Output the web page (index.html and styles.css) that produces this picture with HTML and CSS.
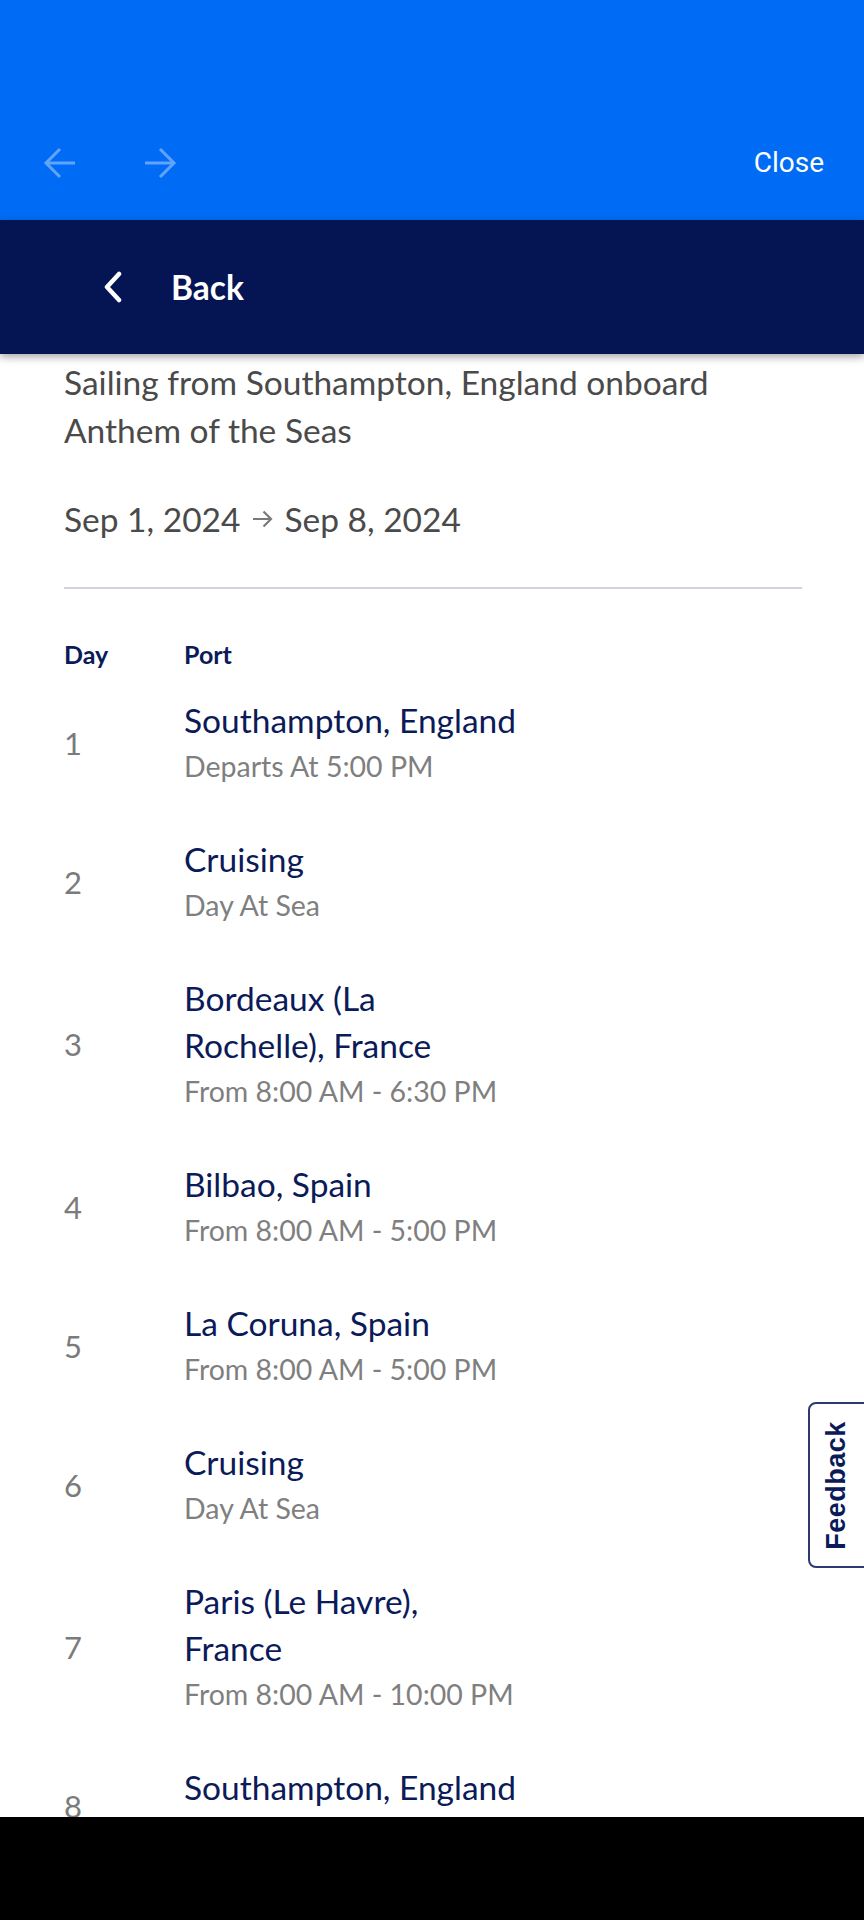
FILE: index.html
```html
<!DOCTYPE html>
<html lang="en">
<head>
<meta charset="utf-8">
<title>Itinerary</title>
<link rel="stylesheet" href="styles.css">
</head>
<body>
<div class="screen">
  <header class="topbar">
    <div class="nav-arrows">
      <svg class="arrow" width="34" height="34" viewBox="0 0 34 34"><path d="M32 17H3M17 3L3 17L17 31" fill="none" stroke="currentColor" stroke-width="3"/></svg>
      <svg class="arrow" width="34" height="34" viewBox="0 0 34 34"><path d="M2 17H31M17 3L31 17L17 31" fill="none" stroke="currentColor" stroke-width="3"/></svg>
    </div>
    <span class="close">Close</span>
  </header>
  <nav class="backbar">
    <svg class="chevron" width="22" height="32" viewBox="0 0 22 32"><path d="M17 3L5 16L17 29" fill="none" stroke="#fff" stroke-width="4.5" stroke-linecap="round" stroke-linejoin="round"/></svg>
    <span class="back-label">Back</span>
  </nav>
  <main class="content">
    <p class="sailing">Sailing from Southampton, England onboard Anthem of the Seas</p>
    <p class="dates">Sep 1, 2024 <svg class="date-arrow" width="24" height="24" viewBox="0 0 24 24"><path d="M3 12H21M13.5 4.5L21 12L13.5 19.5" fill="none" stroke="currentColor" stroke-width="2.2"/></svg> Sep 8, 2024</p>
    <hr class="divider">
    <div class="table-head">
      <span class="col-day">Day</span>
      <span class="col-port">Port</span>
    </div>
    <ol class="itinerary">
      <li class="stop"><span class="col-day num">1</span><div class="col-port"><div class="port">Southampton, England</div><div class="time">Departs At 5:00 PM</div></div></li>
      <li class="stop"><span class="col-day num">2</span><div class="col-port"><div class="port">Cruising</div><div class="time">Day At Sea</div></div></li>
      <li class="stop"><span class="col-day num">3</span><div class="col-port"><div class="port">Bordeaux (La Rochelle), France</div><div class="time">From 8:00 AM - 6:30 PM</div></div></li>
      <li class="stop"><span class="col-day num">4</span><div class="col-port"><div class="port">Bilbao, Spain</div><div class="time">From 8:00 AM - 5:00 PM</div></div></li>
      <li class="stop"><span class="col-day num">5</span><div class="col-port"><div class="port">La Coruna, Spain</div><div class="time">From 8:00 AM - 5:00 PM</div></div></li>
      <li class="stop"><span class="col-day num">6</span><div class="col-port"><div class="port">Cruising</div><div class="time">Day At Sea</div></div></li>
      <li class="stop"><span class="col-day num">7</span><div class="col-port"><div class="port">Paris (Le Havre), France</div><div class="time">From 8:00 AM - 10:00 PM</div></div></li>
      <li class="stop last"><span class="col-day num">8</span><div class="col-port"><div class="port">Southampton, England</div></div></li>
    </ol>
    <div class="feedback"><span>Feedback</span></div>
  </main>
  <div class="sysbar"></div>
</div>
</body>
</html>
```
FILE: styles.css
```css
* { box-sizing: border-box; }
html, body { margin: 0; padding: 0; background: #fff; }
body { font-family: "Lato", "Liberation Sans", sans-serif; }

.screen {
  width: 864px;
  height: 1920px;
  display: flex;
  flex-direction: column;
  overflow: hidden;
}

.topbar {
  height: 220px;
  flex: none;
  background: #006cf5;
  display: flex;
  align-items: flex-end;
  justify-content: space-between;
  padding: 0 40px 40px 43px;
}
.nav-arrows { display: flex; gap: 66px; color: rgba(255,255,255,0.38); }
.arrow { display: block; }
.close {
  font-family: Roboto, "Liberation Sans", sans-serif;
  font-size: 28px;
  color: #fff;
  line-height: 34px;
}

.backbar {
  height: 134px;
  flex: none;
  background: #051554;
  display: flex;
  align-items: center;
  padding: 0 0 0 102px;
  gap: 47px;
  position: relative;
  z-index: 2;
  box-shadow: 0 3px 8px rgba(0,0,0,0.35);
}
.chevron { display: block; }
.back-label { color: #fff; font-size: 33.5px; font-weight: 700; }

.content {
  flex: 1;
  position: relative;
  overflow: hidden;
  padding: 4px 62px 0 64px;
}
.sailing {
  margin: 0;
  font-size: 33.5px;
  line-height: 48px;
  color: #4a4a4a;
}
.dates {
  margin: 41px 0 0;
  font-size: 33.5px;
  line-height: 48px;
  color: #4a4a4a;
  display: flex;
  align-items: center;
  gap: 10px;
}
.date-arrow { color: #7a7a7a; display: block; }
.divider {
  border: 0;
  height: 2px;
  background: #d3d3dd;
  margin: 44px 0 0;
}
.table-head {
  display: flex;
  margin-top: 50px;
  font-size: 25px;
  font-weight: 700;
  line-height: 30px;
  color: #0b1a58;
}
.col-day { width: 120px; flex: none; }
.col-port { flex: none; }

.itinerary {
  list-style: none;
  margin: 28px 0 0;
  padding: 0;
  display: flex;
  flex-direction: column;
  gap: 48px;
}
.stop { display: flex; align-items: center; }
.stop.last { align-items: flex-start; }
.stop.last .num { margin-top: 22px; }
.num { font-size: 31px; color: #7b7b7b; line-height: 40px; }
.stop .col-port { width: 334px; }
.port { font-size: 33.5px; line-height: 47px; color: #0b1a58; }
.time { font-size: 28.5px; line-height: 44px; color: #7f7f7f; }

.feedback {
  position: absolute;
  right: -4px;
  top: 1048px;
  width: 60px;
  height: 166px;
  background: #fff;
  border: 2px solid #2e3a6e;
  border-radius: 8px 0 0 8px;
  display: flex;
  align-items: center;
  justify-content: center;
}
.feedback span {
  transform: rotate(-90deg);
  font-family: "Liberation Sans", Arial, sans-serif;
  font-weight: 700;
  font-size: 27px;
  color: #0b1a58;
  white-space: nowrap;
  letter-spacing: 0.5px;
  margin-left: -4px;
}

.sysbar { height: 103px; flex: none; background: #000; }
```
